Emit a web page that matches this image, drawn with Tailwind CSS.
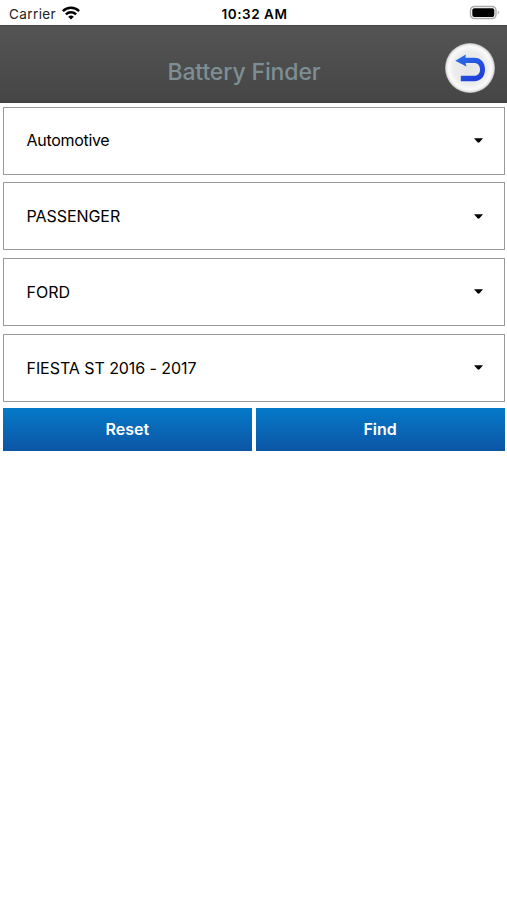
<!DOCTYPE html>
<html lang="en">
<head>
<meta charset="utf-8">
<title>Battery Finder</title>
<script src="https://cdn.jsdelivr.net/npm/@tailwindcss/browser@4"></script>
</head>
<body class="h-[900px] w-[507px] overflow-hidden bg-white font-['Inter','Liberation_Sans',sans-serif] text-black">
<div class="flex h-[25px] items-center bg-white pt-[3px] pr-[7px] pl-[9px]">
  <div class="flex flex-1 items-center gap-[6px]">
    <span class="text-[13.5px] leading-4 tracking-[0.4px] text-[#222]">Carrier</span>
    <svg class="-mt-[3px] h-[14px] w-[18px]" viewBox="0 0 18 14" fill="none" stroke="#000" stroke-width="2.5"><path d="M.9 5.1a11.7 11.7 0 0 1 16.2 0"/><path d="M3.9 8.4a7.3 7.3 0 0 1 10.2 0"/><path d="M9 13.6 6.2 10.8a4 4 0 0 1 5.6 0Z" fill="#000" stroke="none"/></svg>
  </div>
  <span class="-mt-px text-[13.5px] leading-4 font-semibold tracking-[0.55px]">10:32 AM</span>
  <div class="flex flex-1 justify-end">
    <svg class="-mt-[3px] h-[15px] w-[31px]" viewBox="0 0 31 15"><rect x="1.5" y="1.5" width="25.5" height="12" rx="3.8" fill="#fff" stroke="#aaa" stroke-width="1.4"/><rect x="3.3" y="3.2" width="22" height="8.7" rx="2" fill="#000"/><path d="M28.8 5.5q2.4 2 0 4Z" fill="#aaa"/></svg>
  </div>
</div>
<header class="relative flex h-[78px] items-center justify-center border-t border-b border-t-[#444] border-b-[#3d3d3d] bg-linear-to-b from-[#545454] to-[#464646] pt-[16px] pr-[19px]">
  <h1 class="text-[23px] leading-7 font-[550] tracking-[-0.12px] whitespace-nowrap text-[#7d8f94]">Battery Finder</h1>
  <svg class="absolute top-[16px] right-[11px] h-[52px] w-[52px]" viewBox="0 0 52 52">
    <defs>
      <radialGradient id="disc" cx=".5" cy=".5" r=".5"><stop offset="0" stop-color="#e6e6e6"/><stop offset=".65" stop-color="#ececec"/><stop offset=".86" stop-color="#fafafa"/><stop offset=".95" stop-color="#e3e3e3"/><stop offset="1" stop-color="#a0a0a0"/></radialGradient>
      <linearGradient id="arrow" x1="0" y1="0" x2=".7" y2="1"><stop offset="0" stop-color="#2b72e8"/><stop offset="1" stop-color="#1f3ddb"/></linearGradient>
    </defs>
    <circle cx="26" cy="26" r="25" fill="url(#disc)"/>
    <path d="M11.3 18.8 21.8 12.5 21.4 15.7H30.3C37 15.7 41 20.6 41 27.3C41 34.6 36.8 39.2 30.3 39.2H16.8V33.8H29.8C33.8 33.8 36 31.5 36 27.5C36 23.4 33.8 21 30 21H21.6L22.4 24.6Z" fill="url(#arrow)"/>
  </svg>
</header>
<main class="flex flex-col pt-[3.5px] pr-[2.5px] pl-[3px] text-[16px]">
  <div class="flex flex-col gap-[7.7px]">
    <div class="flex h-[68px] items-center justify-between border border-[#999] pr-[21px] pl-[22.5px]"><span class="-mt-px tracking-[-0.3px]">Automotive</span><svg class="h-[5px] w-[9px]" viewBox="0 0 9 5"><path d="M0 .2h9L5.5 4.3q-1 .8-2 0Z"/></svg></div>
    <div class="flex h-[68px] items-center justify-between border border-[#999] pr-[21px] pl-[22.5px]"><span class="tracking-[-0.05px]">PASSENGER</span><svg class="h-[5px] w-[9px]" viewBox="0 0 9 5"><path d="M0 .2h9L5.5 4.3q-1 .8-2 0Z"/></svg></div>
    <div class="flex h-[68px] items-center justify-between border border-[#999] pr-[21px] pl-[22.5px]"><span>FORD</span><svg class="h-[5px] w-[9px]" viewBox="0 0 9 5"><path d="M0 .2h9L5.5 4.3q-1 .8-2 0Z"/></svg></div>
    <div class="flex h-[68px] items-center justify-between border border-[#999] pr-[21px] pl-[22.5px]"><span class="tracking-[-0.06px]">FIESTA ST 2016 - 2017</span><svg class="h-[5px] w-[9px]" viewBox="0 0 9 5"><path d="M0 .2h9L5.5 4.3q-1 .8-2 0Z"/></svg></div>
  </div>
  <div class="mt-[6px] grid h-[43px] grid-cols-2 gap-[4px] font-semibold text-white">
    <button class="bg-linear-to-b from-[#047ac8] to-[#0c55a5]">Reset</button>
    <button class="bg-linear-to-b from-[#047ac8] to-[#0c55a5]">Find</button>
  </div>
</main>
</body>
</html>
